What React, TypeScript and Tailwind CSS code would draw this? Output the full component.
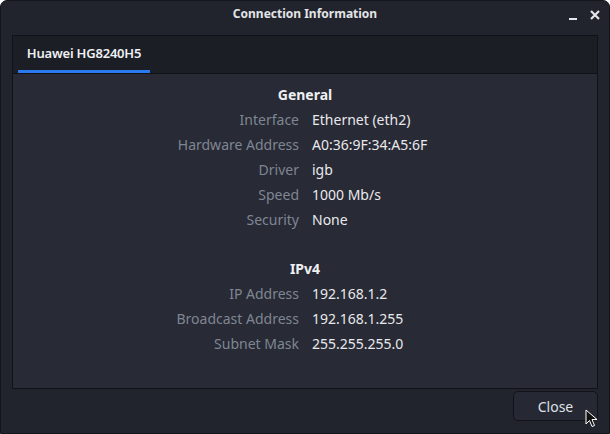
export default function App() {
  const general = [
    ["Interface", "Ethernet (eth2)"],
    ["Hardware Address", "A0:36:9F:34:A5:6F"],
    ["Driver", "igb"],
    ["Speed", "1000 Mb/s"],
    ["Security", "None"],
  ];
  const ipv4 = [
    ["IP Address", "192.168.1.2"],
    ["Broadcast Address", "192.168.1.255"],
    ["Subnet Mask", "255.255.255.0"],
  ];

  const Row = ({ k, v }: { k: string; v: string }) => (
    <div className="grid h-[25px] grid-cols-[299px_1fr] items-center">
      <span className="pr-[13px] text-right text-[#7f8693]">{k}</span>
      <span className="text-[#e8e9ec]">{v}</span>
    </div>
  );

  return (
    <div
      className="flex h-[434px] w-[610px] flex-col overflow-hidden rounded-t-[7px] border border-[#14161b] bg-[#22242d] text-[14px]"
      style={{ fontFamily: '"Noto Sans", "Open Sans", sans-serif' }}
    >
      {/* titlebar */}
      <div className="relative flex h-[34px] shrink-0 justify-center pt-[5px]">
        <span className="text-[12px] font-bold leading-[16px] text-[#e3e4e8]">Connection Information</span>
        <div className="absolute right-[9px] top-[9px] flex items-center gap-[13px]">
          <div className="mt-[8px] h-[2px] w-[8px] bg-[#e5e6ea]" />
          <svg width="10" height="10" viewBox="0 0 10 10">
            <path d="M1 1 L9 9 M9 1 L1 9" stroke="#e5e6ea" strokeWidth="2.2" />
          </svg>
        </div>
      </div>

      {/* notebook */}
      <div className="mx-[11px] flex h-[354px] flex-col border border-[#111217]">
        <div className="flex h-[38px] shrink-0 items-end border-b border-[#111217] bg-[#1c1e25] pl-[5px]">
          <div className="flex h-[38px] w-[132px] flex-col">
            <div className="flex flex-1 items-center justify-center pt-[2px] text-[13px] font-semibold tracking-[-0.2px] text-[#eef0f3]">
              Huawei HG8240H5
            </div>
            <div className="h-[3px] bg-[#2b79ee]" />
          </div>
        </div>
        <div className="flex-1 bg-[#282a35] pt-[8px]">
          <div className="flex h-[25px] items-center justify-center font-bold text-[#eef0f3]">General</div>
          {general.map(([k, v]) => (
            <Row key={k} k={k} v={v} />
          ))}
          <div className="h-[24px]" />
          <div className="flex h-[25px] items-center justify-center font-bold text-[#eef0f3]">IPv4</div>
          {ipv4.map(([k, v]) => (
            <Row key={k} k={k} v={v} />
          ))}
        </div>
      </div>

      {/* footer */}
      <div className="flex flex-1 items-start justify-end pr-[11px] pt-[2px]">
        <div className="relative flex h-[30px] w-[85px] items-center justify-center rounded-[5px] border border-[#121318] bg-[#262833] text-[14px] text-[#dfe1e6]">
          Close
          <svg className="absolute left-[71px] top-[17px]" width="14" height="20" viewBox="0 0 14 20">
            <path d="M1 1 L1 15 L4.5 11.5 L7 17.5 L9.5 16.5 L7 10.5 L12 10.5 Z" fill="#111" stroke="#fff" strokeWidth="1" />
          </svg>
        </div>
      </div>
    </div>
  );
}
